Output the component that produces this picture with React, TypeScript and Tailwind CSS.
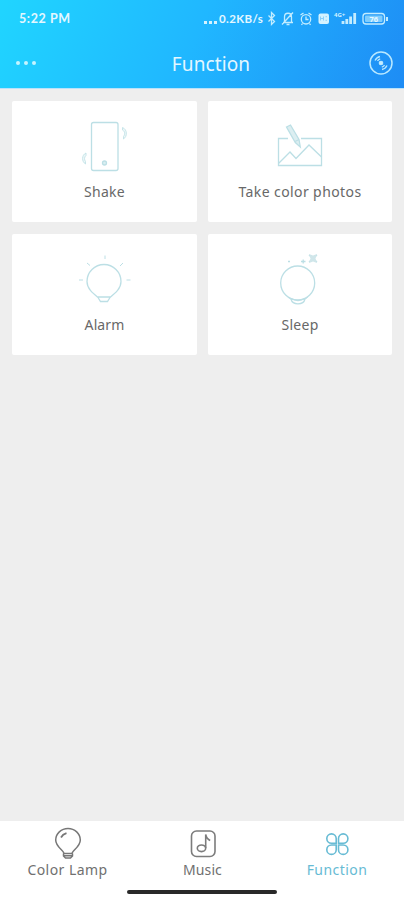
import type { ReactNode } from "react";

const teal = "#bcdfe5";

function Card({ label, spacing, children }: { label: string; spacing: string; children: ReactNode }) {
  return (
    <button className="flex h-[121px] flex-col items-center rounded-[2px] bg-white pt-[15px]">
      <svg width="64" height="64" viewBox="0 0 64 64" fill="none" stroke={teal} strokeWidth="1.3">
        {children}
      </svg>
      <span className={"mt-[2px] text-[14px] leading-5 text-[#686868] " + spacing}>{label}</span>
    </button>
  );
}

function StatusIcons() {
  return (
    <svg className="ml-[3px]" width="121" height="16" viewBox="267 11 121 16" fill="none" stroke="#c2ecff" strokeWidth="1.3">
      <path d="m268.5 15.5 6 6-3 3v-12l3 3-6 6" />
      <path d="M283 22.5h10M284.5 22v-5c0-5 7-5 7 0v5M286.5 24.5h3M293 12.5l-11 12" />
      <circle cx="306" cy="19.3" r="4.7" />
      <path d="M306 16.5v3h2.5M300.5 15l3-2M311.5 15l-3-2M302.5 23.5l-1 1.5M309.5 23.5l1 1.5" />
      <rect x="318.5" y="13.5" width="10.5" height="10.5" rx="2" fill="#d3f2ff" stroke="none" />
      <path d="M320.5 16.5v4M320.5 18.5h3M323.5 16.5v4M325.5 16.7h1.5M325.5 20.3h1.5" stroke="#8bd0fa" strokeWidth="1" />
      <text x="334" y="17" fontSize="6" fontWeight="700" fill="#d3f2ff" stroke="none">4G+</text>
      <path d="M343 24v-3M346.8 24v-5M350.6 24v-7.5M354.7 24V13" strokeWidth="2.8" />
      <rect x="363" y="13.5" width="21.5" height="10.5" rx="3" />
      <rect x="365" y="15.5" width="17.5" height="6.5" rx="1" fill="#7fcdfd" stroke="none" />
      <path d="M387 17v4" strokeWidth="2" />
      <text x="369.5" y="21.5" fontSize="7.5" fontWeight="700" fill="#e6f8ff" stroke="none">76</text>
    </svg>
  );
}

export default function App() {
  return (
    <main className="flex h-[900px] w-[404px] flex-col overflow-hidden bg-[#eeeeee] font-['Noto_Sans',Lato,sans-serif]">
      <header className="h-[89px] shrink-0 border-b border-[#b9e2fb] bg-[linear-gradient(115deg,#20d5ff_0%,#20b7ff_48%,#1e8cf5_100%)] text-[#e4f7ff]">
        <div className="flex h-[38px] items-center pl-[19px]">
          <span className="w-[185px] font-[Lato,sans-serif] text-[12.5px] font-bold tracking-[0.6px]">5:22 PM</span>
          <span className="flex w-[15px] gap-[2px] pt-[7px]">
            <i className="h-[2.5px] w-[3px] bg-[#d3f2ff]" />
            <i className="h-[2.5px] w-[3px] bg-[#d3f2ff]" />
            <i className="h-[2.5px] w-[3px] bg-[#d3f2ff]" />
          </span>
          <span className="w-[45px] whitespace-nowrap font-[Lato,sans-serif] text-[11.5px] font-bold tracking-[0.4px]">0.2KB/s</span>
          <StatusIcons />
        </div>
        <div className="grid h-[50px] grid-cols-[50px_1fr_50px] items-center">
          <button aria-label="Menu" className="flex gap-[4px] pl-[16px]">
            <i className="size-[4px] rounded-full bg-[#c5f4ff]" />
            <i className="size-[4px] rounded-full bg-[#c5f4ff]" />
            <i className="size-[4px] rounded-full bg-[#c5f4ff]" />
          </button>
          <h1 className="pl-[18px] pt-px text-center text-[19px] leading-7 tracking-[0.1px]">Function</h1>
          <svg className="ml-[14px]" width="26" height="26" viewBox="0 0 26 26" fill="none" stroke="#b9e8ff" strokeWidth="1.5">
            <circle cx="13" cy="13" r="11" />
            <circle cx="13" cy="13" r="1.6" fill="#d3f2ff" />
            <path d="M7 10.5c1-2 2.5-3.5 5-4M9.500 11c.6-1.200 1.400-1.800 2.700-2.200M19 15.5c-1 2-2.5 3.5-5 4M16.500 15c-.6 1.200-1.400 1.800-2.700 2.200" strokeWidth="1.3" />
          </svg>
        </div>
      </header>

      <section className="grid grid-cols-[185px_184px] gap-x-[11px] gap-y-[12px] px-[12px] pt-[12px]">
        <Card label="Shake" spacing="tracking-[0.3px]">
          <rect x="18.5" y="6.5" width="26.5" height="48" rx="2" />
          <circle cx="31.5" cy="47" r="2" fill="#d9eef1" />
          <path d="M49.5 11.5c5 2 5 9 1 11.5v-2.5c1.800-2.500 1.500-5-1-6.500ZM13 37c-4.500 2-4.500 8.500-.5 11v-2.500c-1.500-2-1.200-4.500.5-6Z" strokeWidth="0.8" fill="#edf7f8" />
        </Card>
        <Card label="Take color photos" spacing="tracking-[0.4px]">
          <path d="M20 22.5h-9.500v27h43v-27H33" />
          <path d="m10.500 47.500 11.500-11.500 6 6.500 13-13.500 12.500 12" />
          <path d="m18.500 11 4-2 8.500 14.500 1.300 7.500-5-4.500Zm8.500 14.500 4-2" fill="#dceef1" />
        </Card>
        <Card label="Alarm" spacing="tracking-[0.1px]">
          <path d="M25 48.500C19.500 44 14 39.500 14 32.500a17 17 0 0 1 34 0c0 7-5.500 11.500-11 16M24.500 48h13M25 48.500l2.500 4h7l2.500-4" />
          <path d="m14 14 3 2.500M47 17l3-3M32 6.500V10M6 31h4M53.500 31h4" strokeWidth="1" />
        </Card>
        <Card label="Sleep" spacing="tracking-[0.3px]">
          <circle cx="29.7" cy="34" r="17" />
          <path d="m20.500 48 2.500 2c1.500 6.500 12.500 6.500 14 0l2.500-2M23 49.500q7 4 14 0" />
          <path d="M33 12.500h4.500M35.200 10.500v4M20 12.500h2M41 6l8 7M49 6l-8 7" />
          <path d="m41 5 4 1.500L49 5l-1.500 4.500L49 14l-4-1.500-4 1.500 1.500-4.500Z" fill="#d0e6ea" stroke="none" />
        </Card>
      </section>

      <nav className="mt-auto h-[79px] bg-white">
        <div className="grid h-[69px] grid-cols-[135px_135px_134px] text-[14px] text-[#707070]">
          <button className="flex flex-col items-center pt-[5px]">
            <svg width="34" height="34" viewBox="0 0 34 34" fill="none" stroke="#777777" strokeWidth="1.5">
              <path d="M13 27.500c0-3-8.300-6.500-8.300-13.500a12.300 11.500 0 0 1 24.600 0c0 7-8.300 10.500-8.300 13.500ZM12.500 27.500v2.500l2 2h5l2-2v-2.500M12.500 29.700h9" />
              <path d="M10 11.500c1.200-2.300 3-3.600 5.500-4.300" strokeWidth="1.8" />
            </svg>
            <span className="leading-5 tracking-[0.45px]">Color Lamp</span>
          </button>
          <button className="flex flex-col items-center pt-[5px]">
            <svg width="34" height="34" viewBox="0 0 34 34" fill="none" stroke="#7c7c7c" strokeWidth="1.6">
              <rect x="5.5" y="5" width="23.500" height="25.500" rx="5" />
              <path d="M19.700 22V8.500q1 4.500 4.500 6" />
              <ellipse cx="15.5" cy="22.3" rx="4.2" ry="3.3" />
            </svg>
            <span className="leading-5 tracking-[0.1px]">Music</span>
          </button>
          <button className="flex flex-col items-center pt-[5px] text-[#67bbd4]">
            <svg width="34" height="34" viewBox="0 0 34 34" fill="none" stroke="#67bbd4" strokeWidth="1.6">
              <path d="M16.200 17.300h-4.700a4.700 4.700 0 1 1 4.700-4.700Z" />
              <path d="M18.500 17.300h4.700a4.700 4.700 0 1 0-4.700-4.700Z" />
              <path d="M16.200 19h-4.700a4.700 4.700 0 1 0 4.700 4.700Z" />
              <path d="M18.500 19h4.700a4.700 4.700 0 1 1-4.700 4.700Z" />
            </svg>
            <span className="leading-5 tracking-[0.45px]">Function</span>
          </button>
        </div>
        <div className="mx-auto h-[4px] w-[150px] rounded-full bg-[#292929]" />
      </nav>
    </main>
  );
}
